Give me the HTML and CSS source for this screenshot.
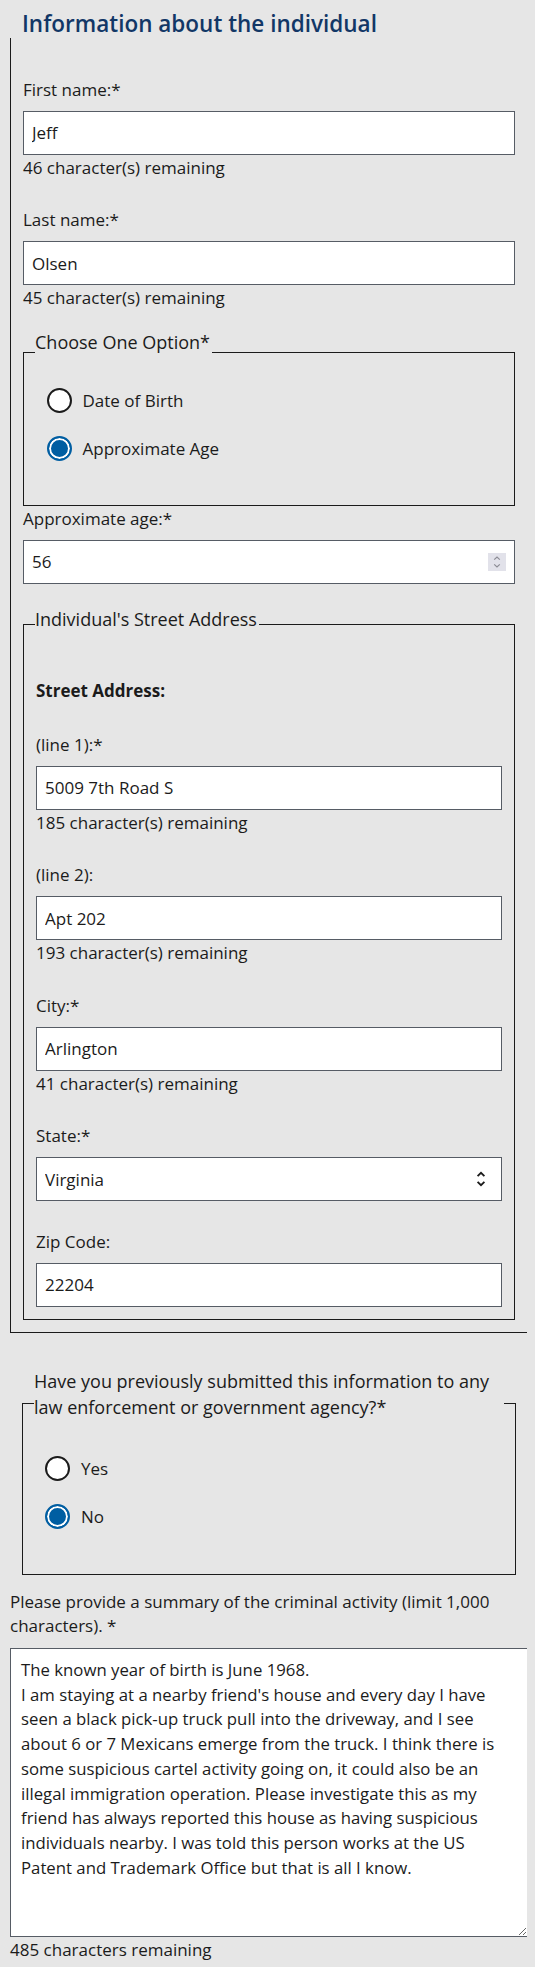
FILE: index.html
```html
<!DOCTYPE html>
<html lang="en">
<head>
<meta charset="utf-8">
<title>Information about the individual</title>
<link rel="stylesheet" href="styles.css">
</head>
<body>
<form class="page">
  <section class="section">
    <h2 class="title">Information about the individual</h2>
    <div class="box">
      <label class="field-label" for="first">First name:*</label>
      <input class="input" id="first" type="text" value="Jeff">
      <span class="helper">46 character(s) remaining</span>

      <label class="field-label" for="last">Last name:*</label>
      <input class="input" id="last" type="text" value="Olsen">
      <span class="helper">45 character(s) remaining</span>

      <fieldset class="group group-choose">
        <legend class="legend legend-choose">Choose One Option*</legend>
        <label class="option option-first"><input class="radio" type="radio" name="opt"><span>Date of Birth</span></label>
        <label class="option"><input class="radio" type="radio" name="opt" checked><span>Approximate Age</span></label>
      </fieldset>

      <label class="field-label field-label-flush" for="age">Approximate age:*</label>
      <div class="control-wrap">
        <input class="input" id="age" type="text" value="56">
        <svg class="spinner" width="18" height="18" viewBox="0 0 18 18" aria-hidden="true">
          <rect width="18" height="18" fill="#e2e2ea"/>
          <path d="M6.2 6.6 L9 4 L11.8 6.6" fill="none" stroke="#8c8c94" stroke-width="1.2"/>
          <path d="M6.2 11.4 L9 14 L11.8 11.4" fill="none" stroke="#8c8c94" stroke-width="1.2"/>
        </svg>
      </div>

      <fieldset class="group group-address">
        <legend class="legend legend-address">Individual's Street Address</legend>
        <p class="subhead">Street Address:</p>

        <label class="field-label field-label-line1" for="line1">(line 1):*</label>
        <input class="input" id="line1" type="text" value="5009 7th Road S">
        <span class="helper">185 character(s) remaining</span>

        <label class="field-label" for="line2">(line 2):</label>
        <input class="input" id="line2" type="text" value="Apt 202">
        <span class="helper">193 character(s) remaining</span>

        <label class="field-label" for="city">City:*</label>
        <input class="input" id="city" type="text" value="Arlington">
        <span class="helper">41 character(s) remaining</span>

        <label class="field-label" for="state">State:*</label>
        <div class="control-wrap">
          <select class="input select" id="state"><option>Virginia</option></select>
          <svg class="select-arrow" width="10" height="18" viewBox="0 0 10 18" aria-hidden="true">
            <path d="M1.6 6.2 L5 2.8 L8.4 6.2" fill="none" stroke="#1b1b1b" stroke-width="1.8"/>
            <path d="M1.6 11.8 L5 15.2 L8.4 11.8" fill="none" stroke="#1b1b1b" stroke-width="1.8"/>
          </svg>
        </div>

        <label class="field-label" for="zip">Zip Code:</label>
        <input class="input" id="zip" type="text" value="22204">
      </fieldset>
    </div>
  </section>

  <fieldset class="group group-question">
    <legend class="legend legend-question">Have you previously submitted this information to any law enforcement or government agency?*</legend>
    <label class="option option-first option-q"><input class="radio" type="radio" name="prev"><span>Yes</span></label>
    <label class="option option-q"><input class="radio" type="radio" name="prev" checked><span>No</span></label>
  </fieldset>

  <label class="summary-label" for="summary">Please provide a summary of the criminal activity (limit 1,000 characters). *</label>
  <textarea class="textarea" id="summary">The known year of birth is June 1968.
I am staying at a nearby friend's house and every day I have seen a black pick-up truck pull into the driveway, and I see about 6 or 7 Mexicans emerge from the truck. I think there is some suspicious cartel activity going on, it could also be an illegal immigration operation. Please investigate this as my friend has always reported this house as having suspicious individuals nearby. I was told this person works at the US Patent and Trademark Office but that is all I know.</textarea>
  <span class="helper">485 characters remaining</span>
</form>
</body>
</html>
```
FILE: styles.css
```css
html, body {
  background: #e6e6e6;
}

body {
  margin: 8px;
  font-family: "Open Sans", "Noto Sans", sans-serif;
  font-size: 17px;
  line-height: 25px;
  color: #1b1b1b;
}

.page {
  display: block;
  margin: 0 -1px 0 2px;
}

.title {
  margin: 2px 0 0;
  padding-left: 12px;
  font-size: 22.5px;
  line-height: 28px;
  font-weight: 600;
  color: #123766;
}

.box {
  border: 1px solid #1b1b1b;
  border-top: 0;
  padding: 11px 12px 12px;
}

.field-label {
  display: block;
  margin-top: 27.5px;
  margin-bottom: 9px;
}

.field-label-flush {
  margin-top: 0;
}

.field-label-line1 {
  margin-top: 29px;
}

.input {
  display: block;
  box-sizing: border-box;
  width: 100%;
  height: 44px;
  margin: 0;
  padding: 0 8px;
  border: 1px solid #565c65;
  border-radius: 0;
  background: #fff;
  color: #1b1b1b;
  font: inherit;
  outline: none;
}

.select {
  appearance: none;
  -webkit-appearance: none;
}

.control-wrap {
  position: relative;
}

.spinner {
  position: absolute;
  right: 9.5px;
  top: 13px;
}

.select-arrow {
  position: absolute;
  right: 16px;
  top: 13px;
}

.helper {
  display: block;
}

.group {
  min-width: 0;
  margin: 0;
  border: 1px solid #1b1b1b;
}

.legend {
  margin: 0;
  padding: 0 2px 0 0;
  font-size: 18px;
  line-height: 25px;
}

.group-choose {
  margin-top: 19.5px;
  padding: 0 11px 43.5px;
}

.legend-choose {
  padding-bottom: 20px;
}

.group-address {
  margin-top: 23px;
  padding: 0 12px 12px;
}

.legend-address {
  margin-left: -1px;
  padding-bottom: 10px;
}

.subhead {
  margin: 36px 0 0;
  font-weight: 700;
}

.option {
  display: flex;
  align-items: center;
  gap: 11px;
  height: 25px;
  margin-top: 23.5px;
  padding-left: 11.5px;
}

.option-first {
  margin-top: 13px;
}

.radio {
  appearance: none;
  -webkit-appearance: none;
  flex: none;
  box-sizing: border-box;
  width: 25px;
  height: 25px;
  margin: 0;
  border: 2px solid #1b1b1b;
  border-radius: 50%;
  background: #fff;
}

.radio:checked {
  border-color: #005ea2;
  background: #005ea2;
  box-shadow: inset 0 0 0 2px #fff;
}

.group-question {
  margin: 35.5px 12px 0;
  padding: 0 11px 45px;
}

.legend-question {
  padding-bottom: 19.5px;
  line-height: 26px;
}

.option-q {
  padding-left: 11px;
}

.group-question .option-first {
  margin-top: 16px;
}

.summary-label {
  display: block;
  margin-top: 14.5px;
  line-height: 24.5px;
}

.textarea {
  display: block;
  box-sizing: border-box;
  width: 100%;
  height: 289px;
  margin: 9.5px 0 0;
  padding: 9px 10px;
  border: 1px solid #565c65;
  border-radius: 0;
  background: #fff;
  color: #1b1b1b;
  font-family: inherit;
  font-size: 16.75px;
  line-height: 24.7px;
  outline: none;
}
```
